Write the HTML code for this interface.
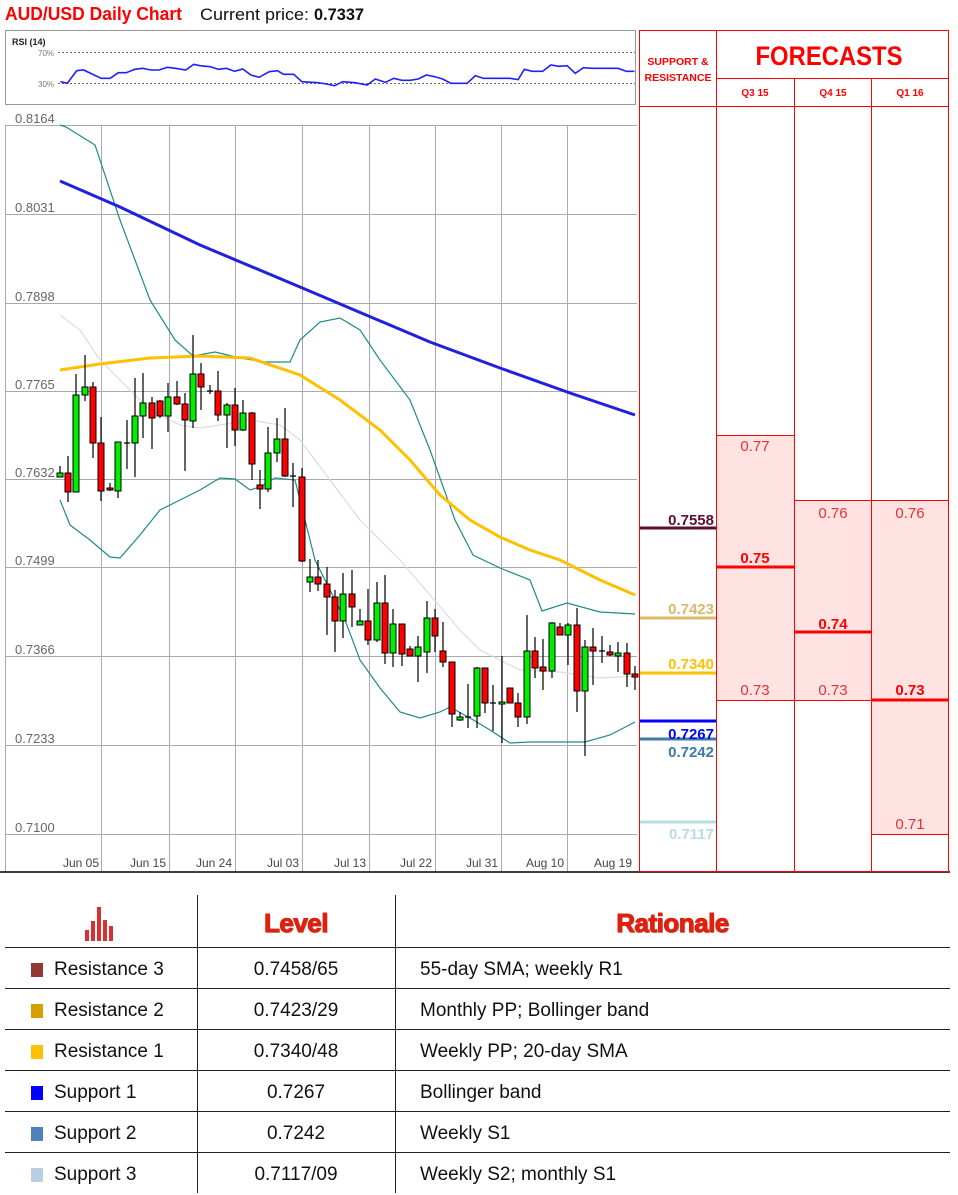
<!DOCTYPE html>
<html><head><meta charset="utf-8">
<style>
html,body{margin:0;padding:0;background:#fff;}
body{width:958px;height:1195px;position:relative;overflow:hidden;font-family:"Liberation Sans",sans-serif;}
svg{position:absolute;left:0;top:0;}
.g{fill:#00ee00;stroke:#000;stroke-width:1}
.r{fill:#ff0000;stroke:#000;stroke-width:1}
.w{stroke:#000;stroke-width:1.2;fill:none}
.tbl{position:absolute;left:5px;top:895px;width:945px;}
.row{position:absolute;left:0;width:945px;height:41px;border-top:1.5px solid #222;font-size:19px;color:#111;}
.c1{position:absolute;left:49px;top:11px;}
.c2{position:absolute;left:192px;width:198px;text-align:center;top:11px;}
.c3{position:absolute;left:415px;top:11px;}
.sq{position:absolute;left:26px;top:15px;width:12px;height:14px;}
.vl{position:absolute;top:895px;width:1px;height:298px;background:#222;}
.hd{position:absolute;top:908px;font-weight:bold;color:#e0200e;font-size:26px;text-align:center;letter-spacing:-0.5px;-webkit-text-stroke:1px #e0200e;text-shadow:1px 1px 0 #c0c0c0;}
</style></head><body>
<svg width="958" height="880" viewBox="0 0 958 880">
<text x="5" y="20" font-size="18" font-weight="bold" fill="#ff0000" textLength="177" lengthAdjust="spacingAndGlyphs">AUD/USD Daily Chart</text>
<text x="200" y="20" font-size="17" fill="#111" textLength="109" lengthAdjust="spacingAndGlyphs">Current price:</text>
<text x="314" y="20" font-size="17" font-weight="bold" fill="#111" textLength="50" lengthAdjust="spacingAndGlyphs">0.7337</text>
<rect x="5.5" y="30.5" width="630" height="74" fill="#fff" stroke="#999"/>
<text x="12" y="45" font-size="9" font-weight="bold" fill="#222">RSI (14)</text>
<text x="38" y="56" font-size="8" fill="#777">70%</text>
<text x="38" y="87" font-size="8" fill="#777">30%</text>
<line x1="58" y1="52.5" x2="635" y2="52.5" stroke="#666" stroke-dasharray="2,2"/>
<line x1="58" y1="83.5" x2="635" y2="83.5" stroke="#666" stroke-dasharray="2,2"/>
<g transform="scale(0.408,0.3333)"><polyline vector-effect="non-scaling-stroke" fill="none" stroke="#2020ff" stroke-width="1.6" points="148,245 165,250 188,212 205,210 248,235 270,235 290,218 310,218 330,208 350,205 370,210 390,210 410,202 430,205 455,210 475,193 490,197 515,200 535,208 555,205 575,214 595,207 615,225 635,232 660,215 680,212 695,223 720,223 740,245 780,248 800,252 820,257 840,245 870,248 900,255 920,237 945,247 965,235 985,241 1005,241 1025,237 1045,225 1065,230 1085,237 1105,250 1145,250 1165,227 1185,235 1225,235 1250,235 1270,239 1285,208 1305,214 1330,214 1350,195 1370,199 1390,197 1410,220 1430,203 1450,205 1500,205 1515,205 1535,214 1555,214"/></g>
<g stroke="#aaa" stroke-width="1">
<line x1="5" y1="125.5" x2="637" y2="125.5"/>
<line x1="5" y1="214.5" x2="637" y2="214.5"/>
<line x1="5" y1="303.5" x2="637" y2="303.5"/>
<line x1="5" y1="391.5" x2="637" y2="391.5"/>
<line x1="5" y1="479.5" x2="637" y2="479.5"/>
<line x1="5" y1="567.5" x2="637" y2="567.5"/>
<line x1="5" y1="656.5" x2="637" y2="656.5"/>
<line x1="5" y1="745.5" x2="637" y2="745.5"/>
<line x1="5" y1="834.5" x2="637" y2="834.5"/>
<line x1="101.5" y1="125" x2="101.5" y2="872"/>
<line x1="169.5" y1="125" x2="169.5" y2="872"/>
<line x1="235.5" y1="125" x2="235.5" y2="872"/>
<line x1="302.5" y1="125" x2="302.5" y2="872"/>
<line x1="369.5" y1="125" x2="369.5" y2="872"/>
<line x1="435.5" y1="125" x2="435.5" y2="872"/>
<line x1="501.5" y1="125" x2="501.5" y2="872"/>
<line x1="567.5" y1="125" x2="567.5" y2="872"/>
<line x1="5.5" y1="125" x2="5.5" y2="872"/>
</g>
<g font-size="13" fill="#666">
<text x="15" y="123">0.8164</text>
<text x="15" y="212">0.8031</text>
<text x="15" y="301">0.7898</text>
<text x="15" y="389">0.7765</text>
<text x="15" y="477">0.7632</text>
<text x="15" y="565">0.7499</text>
<text x="15" y="654">0.7366</text>
<text x="15" y="743">0.7233</text>
<text x="15" y="832">0.7100</text>
</g>
<g font-size="12" fill="#444" text-anchor="end">
<text x="99" y="867">Jun 05</text>
<text x="166" y="867">Jun 15</text>
<text x="232" y="867">Jun 24</text>
<text x="299" y="867">Jul 03</text>
<text x="366" y="867">Jul 13</text>
<text x="432" y="867">Jul 22</text>
<text x="498" y="867">Jul 31</text>
<text x="564" y="867">Aug 10</text>
<text x="632" y="867">Aug 19</text>
</g>
<polyline fill="none" stroke="#ddd" stroke-width="1.2" points="60,315 80,330 100,360 120,380 150,410 180,425 200,428 220,425 250,420 280,425 300,440 330,480 360,520 400,560 430,595 460,630 480,650 520,670 560,672 600,678 635,676"/>
<polyline fill="none" stroke="#1f8a8a" stroke-width="1.2" points="60,125 66,127 95,145 120,220 150,300 175,340 193,356 215,352 240,358 265,362 290,362 300,340 320,322 340,318 360,330 380,360 410,400 430,450 455,520 473,555 500,568 530,580 542,611 567,603 600,612 635,614"/>
<polyline fill="none" stroke="#1f8a8a" stroke-width="1.2" points="60,500 70,525 90,540 110,557 120,558 140,535 160,510 180,500 200,490 220,478 235,479 250,490 260,487 275,478 295,480 305,520 315,560 330,590 345,620 360,660 380,688 400,712 420,718 440,712 450,707 470,718 490,730 510,743 530,742 560,742 585,742 610,735 635,722"/>
<polyline fill="none" stroke="#ffc000" stroke-width="3" points="60,370 100,364 150,358 200,356 250,358 300,375 340,400 380,430 410,460 440,495 470,520 500,537 530,550 560,560 600,580 635,595"/>
<polyline fill="none" stroke="#2020dd" stroke-width="3" points="60,181 120,207 200,245 300,287 430,342 500,368 570,393 635,415"/>
<g class="w">
<path d="M60 466V477M68 456V502M76 374V492M85 355V401M93 382V458M101 417V501M110 483V491M118 442V498M127 420V469M135 378V477M143 373V438M152 397V449M160 400V418M168 383V432M177 381V405M185 393V471M193 335V428M201 363V410M210 385V394M218 371V421M227 403V448M235 388V446M243 400V431M252 412V480M260 470V509M268 427V492M277 418V462M285 408V477M293 463V507M302 468V562M310 559V592M318 560V591M327 567V635M335 590V652M343 573V638M352 570V627M360 609V625M368 589V645M377 582V642M385 575V664M393 609V667M402 624V666M410 646V656M418 636V682M427 601V673M435 609V652M443 622V667M452 662V727M460 712V721M468 684V728M477 667V728M485 668V713M493 685V731M502 656V743M510 688V703M518 693V727M527 615V724M535 637V678M543 639V690M552 622V678M560 623V635M568 623V665M577 608V712M585 640V756M593 628V685M602 636V663M610 645V656M618 642V672M627 643V687M635 666V690"/>
<path d="M124 443H130M207 391H213M290 476H296M465 717H471M490 703H496M599 651H605"/>
</g>
<rect class="g" x="57" y="473" width="6" height="4"/>
<rect class="r" x="65" y="473" width="6" height="19"/>
<rect class="g" x="73" y="395" width="6" height="97"/>
<rect class="g" x="82" y="387" width="6" height="8"/>
<rect class="r" x="90" y="387" width="6" height="56"/>
<rect class="r" x="98" y="443" width="6" height="48"/>
<rect class="r" x="107" y="488" width="6" height="2"/>
<rect class="g" x="115" y="442" width="6" height="49"/>
<rect class="g" x="132" y="416" width="6" height="27"/>
<rect class="g" x="140" y="403" width="6" height="13"/>
<rect class="r" x="149" y="403" width="6" height="15"/>
<rect class="r" x="157" y="401" width="6" height="15"/>
<rect class="g" x="165" y="397" width="6" height="19"/>
<rect class="r" x="174" y="397" width="6" height="7"/>
<rect class="r" x="182" y="404" width="6" height="16"/>
<rect class="g" x="190" y="374" width="6" height="47"/>
<rect class="r" x="198" y="374" width="6" height="13"/>
<rect class="r" x="215" y="391" width="6" height="24"/>
<rect class="g" x="224" y="405" width="6" height="10"/>
<rect class="r" x="232" y="405" width="6" height="25"/>
<rect class="g" x="240" y="413" width="6" height="17"/>
<rect class="r" x="249" y="413" width="6" height="51"/>
<rect class="r" x="257" y="485" width="6" height="4"/>
<rect class="g" x="265" y="453" width="6" height="36"/>
<rect class="g" x="274" y="439" width="6" height="14"/>
<rect class="r" x="282" y="439" width="6" height="37"/>
<rect class="r" x="299" y="477" width="6" height="84"/>
<rect class="g" x="307" y="577" width="6" height="5"/>
<rect class="r" x="315" y="577" width="6" height="7"/>
<rect class="r" x="324" y="584" width="6" height="13"/>
<rect class="r" x="332" y="597" width="6" height="24"/>
<rect class="g" x="340" y="594" width="6" height="27"/>
<rect class="r" x="349" y="594" width="6" height="13"/>
<rect class="g" x="357" y="621" width="6" height="4"/>
<rect class="r" x="365" y="621" width="6" height="19"/>
<rect class="g" x="374" y="603" width="6" height="37"/>
<rect class="r" x="382" y="603" width="6" height="50"/>
<rect class="g" x="390" y="624" width="6" height="29"/>
<rect class="r" x="399" y="624" width="6" height="30"/>
<rect class="r" x="407" y="649" width="6" height="7"/>
<rect class="g" x="415" y="647" width="6" height="9"/>
<rect class="g" x="424" y="618" width="6" height="34"/>
<rect class="r" x="432" y="618" width="6" height="18"/>
<rect class="r" x="440" y="651" width="6" height="11"/>
<rect class="r" x="449" y="662" width="6" height="52"/>
<rect class="g" x="457" y="717" width="6" height="3"/>
<rect class="g" x="474" y="668" width="6" height="48"/>
<rect class="r" x="482" y="668" width="6" height="35"/>
<rect class="g" x="499" y="702" width="6" height="2"/>
<rect class="r" x="507" y="688" width="6" height="15"/>
<rect class="r" x="515" y="703" width="6" height="14"/>
<rect class="g" x="524" y="651" width="6" height="66"/>
<rect class="r" x="532" y="651" width="6" height="17"/>
<rect class="r" x="540" y="667" width="6" height="4"/>
<rect class="g" x="549" y="623" width="6" height="48"/>
<rect class="r" x="557" y="627" width="6" height="8"/>
<rect class="g" x="565" y="625" width="6" height="10"/>
<rect class="r" x="574" y="625" width="6" height="66"/>
<rect class="g" x="582" y="647" width="6" height="44"/>
<rect class="r" x="590" y="647" width="6" height="4"/>
<rect class="r" x="607" y="652" width="6" height="3"/>
<rect class="g" x="615" y="653" width="6" height="3"/>
<rect class="r" x="624" y="653" width="6" height="21"/>
<rect class="r" x="632" y="674" width="6" height="3"/>
<line x1="0" y1="872" x2="950" y2="872" stroke="#000" stroke-width="1.5"/>
<rect x="716" y="435" width="78" height="265" fill="#ffe3e3"/>
<rect x="794" y="500" width="77" height="200" fill="#ffe3e3"/>
<rect x="871" y="500" width="77" height="334" fill="#ffe3e3"/>
<g stroke="#ff0000" stroke-width="1" fill="none">
<rect x="639.5" y="30.5" width="309" height="841"/>
<line x1="716.5" y1="30" x2="716.5" y2="872"/>
<line x1="716" y1="78.5" x2="948" y2="78.5"/>
<line x1="639" y1="106.5" x2="948" y2="106.5"/>
<line x1="794.5" y1="78" x2="794.5" y2="872"/>
<line x1="871.5" y1="78" x2="871.5" y2="872"/>
<line x1="716" y1="435.5" x2="794" y2="435.5"/>
<line x1="794" y1="500.5" x2="948" y2="500.5"/>
<line x1="716" y1="700.5" x2="871" y2="700.5"/>
<line x1="871" y1="834.5" x2="948" y2="834.5"/>
</g>
<g stroke="#ff0000" stroke-width="3">
<line x1="716" y1="567" x2="794" y2="567"/>
<line x1="794" y1="632" x2="871" y2="632"/>
<line x1="871" y1="700" x2="948" y2="700"/>
</g>
<g fill="#ff0000" font-weight="bold" text-anchor="middle">
<text x="678" y="65" font-size="10.5">SUPPORT &amp;</text>
<text x="678" y="81" font-size="10.5">RESISTANCE</text>
<text x="829" y="65" font-size="27" textLength="147" lengthAdjust="spacingAndGlyphs">FORECASTS</text>
<text x="755" y="96" font-size="10">Q3 15</text>
<text x="833" y="96" font-size="10">Q4 15</text>
<text x="910" y="96" font-size="10">Q1 16</text>
</g>
<g fill="#e83030" font-size="15" text-anchor="middle">
<text x="755" y="451">0.77</text>
<text x="755" y="563" font-weight="bold" fill="#ff0000">0.75</text>
<text x="755" y="695">0.73</text>
<text x="833" y="518">0.76</text>
<text x="833" y="629" font-weight="bold" fill="#ff0000">0.74</text>
<text x="833" y="695">0.73</text>
<text x="910" y="518">0.76</text>
<text x="910" y="695" font-weight="bold" fill="#ff0000">0.73</text>
<text x="910" y="829">0.71</text>
</g>
<g stroke-width="3">
<line x1="640" y1="528" x2="716" y2="528" stroke="#5c1030"/>
<line x1="640" y1="618" x2="716" y2="618" stroke="#dcb86a"/>
<line x1="640" y1="673" x2="716" y2="673" stroke="#ffc000"/>
<line x1="640" y1="721" x2="716" y2="721" stroke="#0000ff"/>
<line x1="640" y1="739" x2="716" y2="739" stroke="#3a7ba8"/>
<line x1="640" y1="822" x2="716" y2="822" stroke="#b7dde0"/>
</g>
<g font-size="15" font-weight="bold" text-anchor="end">
<text x="714" y="525" fill="#5c1030">0.7558</text>
<text x="714" y="614" fill="#dcb86a">0.7423</text>
<text x="714" y="669" fill="#ffc000">0.7340</text>
<text x="714" y="739" fill="#0000ff">0.7267</text>
<text x="714" y="757" fill="#3a7ba8">0.7242</text>
<text x="714" y="839" fill="#b7dde0">0.7117</text>
</g>
</svg>
<svg width="958" height="60" style="top:895px">
<g fill="#d83030">
<rect x="85" y="35" width="4" height="11"/>
<rect x="91" y="26" width="4" height="20"/>
<rect x="97" y="12" width="4" height="34"/>
<rect x="103" y="25" width="4" height="21"/>
<rect x="109" y="31" width="4" height="15"/>
</g>
</svg>
<div class="hd" style="left:197px;width:198px;">Level</div>
<div class="hd" style="left:395px;width:555px;">Rationale</div>
<div class="vl" style="left:197px"></div>
<div class="vl" style="left:395px"></div>
<div class="tbl">
<div class="row" style="top:52px"><div class="sq" style="background:#953735"></div><div class="c1">Resistance 3</div><div class="c2">0.7458/65</div><div class="c3">55-day SMA; weekly R1</div></div>
<div class="row" style="top:93px"><div class="sq" style="background:#d4a000"></div><div class="c1">Resistance 2</div><div class="c2">0.7423/29</div><div class="c3">Monthly PP; Bollinger band</div></div>
<div class="row" style="top:134px"><div class="sq" style="background:#ffc000"></div><div class="c1">Resistance 1</div><div class="c2">0.7340/48</div><div class="c3">Weekly PP; 20-day SMA</div></div>
<div class="row" style="top:175px"><div class="sq" style="background:#0000ff"></div><div class="c1">Support 1</div><div class="c2">0.7267</div><div class="c3">Bollinger band</div></div>
<div class="row" style="top:216px"><div class="sq" style="background:#4f81bd"></div><div class="c1">Support 2</div><div class="c2">0.7242</div><div class="c3">Weekly S1</div></div>
<div class="row" style="top:257px"><div class="sq" style="background:#b9cde5"></div><div class="c1">Support 3</div><div class="c2">0.7117/09</div><div class="c3">Weekly S2; monthly S1</div></div>
</div>
</body></html>
